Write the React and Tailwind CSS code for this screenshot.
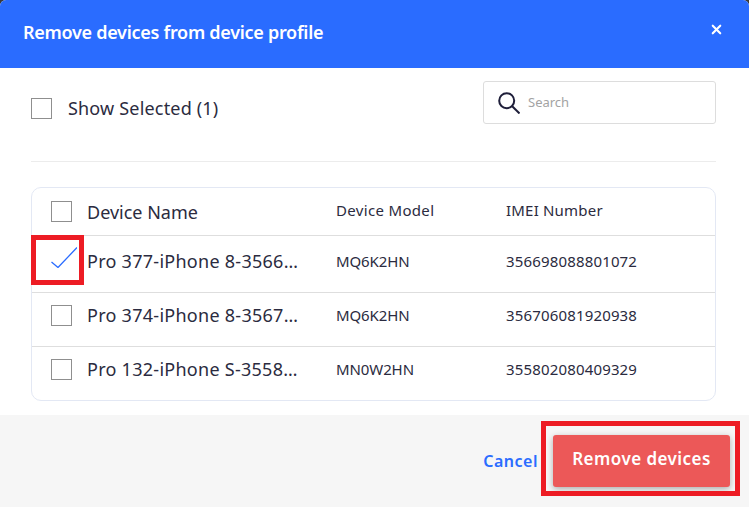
import React from 'react';
import { X } from 'lucide-react';

const font = "font-['Noto_Sans','Open_Sans',sans-serif]";

const rows = [
    { name: 'Pro 377-iPhone 8-3566…', model: 'MQ6K2HN', imei: '356698088801072', checked: true, height: 'h-[57px] pb-[6px]' },
    { name: 'Pro 374-iPhone 8-3567…', model: 'MQ6K2HN', imei: '356706081920938', height: 'h-[54px] pb-[8px]' },
    { name: 'Pro 132-iPhone S-3558…', model: 'MN0W2HN', imei: '355802080409329', height: 'h-[54px] pb-[8px]' },
];

const Box = () => <div className="w-[21px] h-[21px] border border-[#8f8f8f] bg-white shrink-0" />;

const App = () => {
    return (
        <div className={`${font} w-[749px] h-[507px] bg-[#3a3a3a] overflow-hidden`}>
            <div className="relative w-full h-full bg-white rounded-t-[6px] overflow-hidden flex flex-col">
                <div className="h-[68px] shrink-0 bg-[#2a6cff] flex items-start justify-between pl-[23px] pr-[25px]">
                    <h1 className="mt-[19px] text-[18px] leading-[26px] font-semibold text-white tracking-[-0.28px]">Remove devices from device profile</h1>
                    <X className="mt-[22px] w-[15px] h-[15px] text-white" strokeWidth={3.4} />
                </div>

                <div className="flex-1 pl-[31px] pr-[33px]">
                    <div className="flex items-start justify-between h-[94px] border-b border-[#ececec]">
                        <div className="flex items-center mt-[28px]">
                            <Box />
                            <span className="ml-[16px] text-[18px] leading-[24px] tracking-[0.18px] text-[#2b2b40]">Show Selected (1)</span>
                        </div>
                        <div className="mt-[13px] w-[233px] h-[43px] border border-[#dddddd] rounded-[3px] flex items-center pl-[14px]">
                            <svg className="w-[22px] h-[22px] shrink-0" viewBox="0 0 22 22" fill="none" stroke="#1f1f3a" strokeWidth="2">
                                <circle cx="8.7" cy="8.7" r="7.5" />
                                <path d="M14.2 14.2L21.5 21.5" />
                            </svg>
                            <span className="ml-[8px] text-[13px] text-[#a3a3a3]">Search</span>
                        </div>
                    </div>

                    <div className="mt-[25px] h-[214px] border border-[#e3e8f4] rounded-[10px] overflow-hidden flex flex-col text-[#2b2b40]">
                        <div className="h-[47px] shrink-0 flex items-center pl-[19px]">
                            <Box />
                            <span className="ml-[15px] w-[249px] text-[18px] mt-[2px]">Device Name</span>
                            <span className="w-[170px] text-[15px] tracking-[0.33px] -mt-[2px]">Device Model</span>
                            <span className="text-[15px] tracking-[0.2px] -mt-[2px]">IMEI Number</span>
                        </div>
                        {rows.map((row) => (
                            <div key={row.imei} className={`${row.height} shrink-0 border-t border-[#dedede] flex items-center pl-[19px]`}>
                                {row.checked ? (
                                    <svg className="w-[26px] h-[21px] -mr-[5px] -mt-[7px] shrink-0" viewBox="0 0 26 21" fill="none" stroke="#2a6cff" strokeWidth="1.3">
                                        <path d="M0.5 15L7 20.5L26 0.5" />
                                    </svg>
                                ) : (
                                    <Box />
                                )}
                                <span className="ml-[15px] w-[249px] whitespace-nowrap text-[18px] tracking-[0.27px]">{row.name}</span>
                                <span className="w-[170px] text-[15px] tracking-[-0.1px]">{row.model}</span>
                                <span className="text-[15px] tracking-[0.16px]">{row.imei}</span>
                            </div>
                        ))}
                    </div>
                </div>

                <div className="h-[92px] shrink-0 bg-[#f6f6f6] flex items-start justify-end pr-[19px]">
                    <span className="mt-[34px] text-[16px] leading-[24px] font-semibold tracking-[0.5px] text-[#2a6cff]">Cancel</span>
                    <button className="ml-[15px] mt-[20px] w-[177px] h-[52px] pb-[4px] rounded-[3px] bg-[#ec5858] text-white text-[17px] font-semibold tracking-[0.45px] shadow-[0_2px_6px_rgba(0,0,0,0.3)]">Remove devices</button>
                </div>

                <div className="absolute left-[31px] top-[235px] w-[53px] h-[50px] border-[5px] border-[#ed1c24]" />
                <div className="absolute left-[541px] top-[421px] w-[199px] h-[75px] border-[5px] border-[#ed1c24]" />
            </div>
        </div>
    );
};

export default App;
